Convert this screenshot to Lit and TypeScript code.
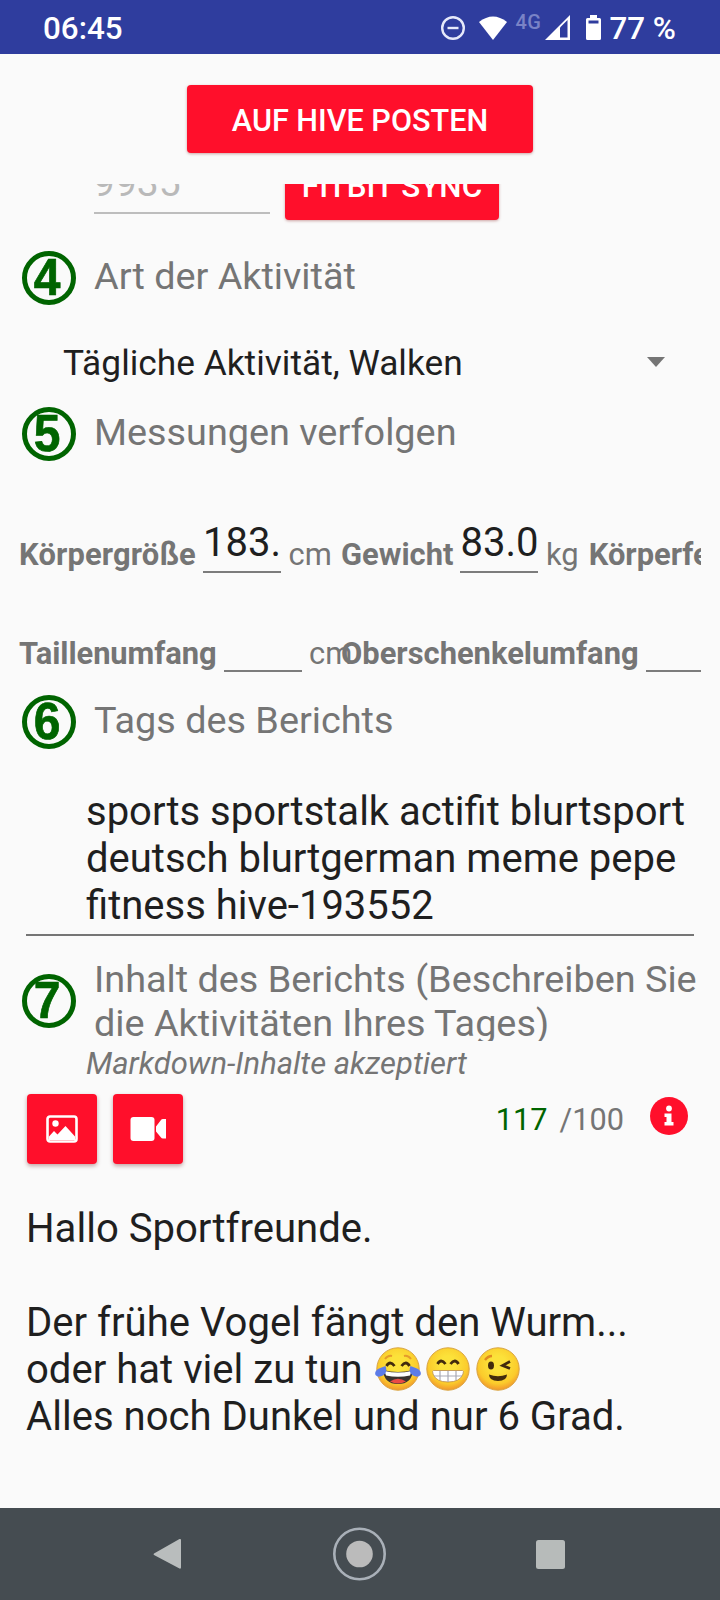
import { LitElement, html, css, svg } from "lit";
import { customElement, property } from "lit/decorators.js";

@customElement("step-title")
class StepTitle extends LitElement {
  @property() num = "";
  @property() text = "";
  static styles = css`
    :host { display: flex; align-items: center; height: 54px; padding-left: 3px; }
    .ring { box-sizing: border-box; flex: none; width: 54px; height: 54px; border: 5.5px solid #006400; border-radius: 50%; display: flex; align-items: center; justify-content: center; font: bold 51px/42px "Liberation Sans", Arial, sans-serif; color: #006400; }
    .ring span { transform: scaleX(.94); margin: -1px 3px 0 0; -webkit-text-stroke: .7px #006400; }
    .text { margin-left: 18px; font-size: 37.8px; line-height: 44.3px; color: #757575; white-space: nowrap; padding-bottom: 4px; }
    :host([tall]) { height: 80px; align-items: flex-start; overflow: hidden; }
    :host([tall]) .ring { margin-top: 13px; }
    :host([tall]) .text { white-space: pre; padding: 0; margin-top: -4px; }
  `;
  render() {
    return html`<div class="ring"><span>${this.num}</span></div><div class="text">${this.text}</div>`;
  }
}

const emojiDefs = svg`<defs>
  <radialGradient id="face" cx="50%" cy="38%" r="62%">
    <stop offset="0.3" stop-color="#fce23a"/><stop offset="0.75" stop-color="#fbcb2b"/><stop offset="1" stop-color="#f2962c"/>
  </radialGradient></defs>
  <circle cx="22" cy="22" r="21.2" fill="url(#face)" stroke="#d9a441" stroke-width="1"/>`;

@customElement("app-root")
class AppRoot extends LitElement {
  static styles = css`
    :host { display: flex; flex-direction: column; width: 720px; height: 1600px; overflow: hidden; background: #fafafa; font-family: Roboto, sans-serif; color: #1f1f1f; }
    svg { display: block; flex: none; }
    .status { height: 54px; flex: none; background: #2f3d9e; color: #fff; display: flex; align-items: center; padding: 0 44px 0 43px; box-sizing: border-box; font-weight: 500; font-size: 31.4px; line-height: 54px; padding-top: 1px; }
    .status .time { flex: 1; }
    .status .txt { padding-top: 2px; line-height: 52px; }
    .wifi { margin-left: 14px; }
    .batt { margin: 0 8px 0 15px; }
    .net { font-size: 20px; color: #7a83c6; width: 27px; margin: -12px 3px 0 8px; letter-spacing: .5px; }
    .head { height: 130px; flex: none; display: flex; justify-content: center; align-items: flex-start; box-sizing: border-box; padding: 31px 0 0 0; }
    .btn { box-sizing: border-box; background: #ff0f2b; color: #fff; border-radius: 4px; font-weight: 500; font-size: 30.6px; height: 69px; line-height: 72px; text-align: center; box-shadow: 0 1px 3px rgba(120,0,0,.35); white-space: nowrap; }
    .post { width: 346px; height: 68px; }
    .scroll { flex: 1; overflow: hidden; padding: 0 19px; display: flex; flex-direction: column; }
    .sync { display: flex; height: 70px; margin-top: -33px; padding-left: 75px; flex: none; }
    .steps { width: 176px; height: 61px; border-bottom: 2px solid #bdbdbd; font-size: 39px; line-height: 65px; color: #b9b9b9; margin-right: 15px; text-indent: -1px; }
    .fit { width: 214px; height: 69px; font-size: 31.4px; }
    step-title.s4 { margin-top: 30px; }
    .spin { display: flex; align-items: center; height: 54px; margin-top: 30px; padding: 0 36px 0 44px; font-size: 35.3px; line-height: 54px; }
    .spin span { flex: 1; padding-top: 1px; }
    step-title.s5 { margin-top: 18px; }
    .row { display: grid; grid-template-columns: 322px 420px; width: 682px; overflow: hidden; height: 66px; font-size: 30.9px; color: #757575; flex: none; }
    .r1 { margin-top: 49px; }
    .r2 { margin-top: 33px; }
    .cell { display: flex; white-space: nowrap; line-height: 90px; height: 66px; }
    .cell b { font-weight: 700; }
    .in { width: 78px; flex: none; height: 63px; box-sizing: border-box; border-bottom: 2px solid #7c7c7c; margin: 0 7.5px 0 7px; font-size: 40px; line-height: 66px; color: #1f1f1f; overflow: hidden; }
    .r1 .cell:first-child b { letter-spacing: .16px; }
    .r2 .cell:first-child b { letter-spacing: -.08px; }
    .kg { margin-right: 10px; }
    .six { margin-top: 20px; }
    .tags { margin: 39px 7px 0; padding-left: 60px; height: 146px; border-bottom: 2px solid #757575; font-size: 40px; line-height: 47px; white-space: pre; flex: none; }
    .seven { margin-top: 25px; }
    .md { font-style: italic; font-size: 31px; line-height: 40px; color: #757575; padding-left: 67px; margin-top: 3px; }
    .tools { display: flex; height: 70px; margin: 10px 7px 0 8px; flex: none; }
    .tool { width: 70px; height: 70px; display: flex; align-items: center; justify-content: center; margin-right: 16px; box-shadow: 0 2px 4px rgba(90,0,0,.35); }
    .count { margin-left: auto; display: flex; font-size: 30.7px; line-height: 52px; color: #757575; }
    .ok { color: #006400; margin-right: 12px; }
    .count svg { margin: 3px 6px 0 26px; }
    .editor { margin: 41px 7px 0; font-size: 40.1px; line-height: 47px; white-space: pre; }
    .line { display: flex; height: 47px; }
    .emo { display: flex; gap: 5.5px; margin: 1px 0 0 12px; }
    .nav { height: 92px; flex: none; background: #454c51; display: flex; align-items: center; box-sizing: border-box; padding: 0 155px 0 153px; justify-content: space-between; }
  `;

  render() {
    return html`
      <div class="status">
        <span class="time txt">06:45</span>
        <svg width="24" height="26" viewBox="0 0 24 26"><circle cx="12" cy="13" r="10.8" fill="none" stroke="#e6e9fa" stroke-width="2.4"/><path d="M6.500 13h11" stroke="#e6e9fa" stroke-width="2.400"/></svg>
        <svg class="wifi" width="28" height="26" viewBox="0 0 28 26"><path d="M14 25 0 7Q14-4 28 7Z" fill="#fff"/></svg>
        <span class="net">4G</span>
        <svg width="26" height="26" viewBox="0 0 26 26"><path d="M0 25 25 0V25Z" fill="#fff"/><path d="M15 12.500 22.500 5V22.500H15Z" fill="#2f3d9e"/></svg>
        <svg class="batt" width="15" height="26" viewBox="0 0 15 26"><path d="M4 3V0h7v3h2.500Q15 3 15 4.500V23.500Q15 25 13.500 25h-12Q0 25 0 23.500V4.500Q0 3 1.500 3Z" fill="#fff"/><path d="M2.500 5.500h10v3h-10z" fill="#2f3d9e"/></svg>
        <span class="txt">77 %</span>
      </div>
      <div class="head"><div class="btn post">AUF HIVE POSTEN</div></div>
      <div class="scroll">
        <div class="sync"><div class="steps">9935</div><div class="btn fit">FITBIT SYNC</div></div>
        <step-title class="s4" num="4" text="Art der Aktivität"></step-title>
        <div class="spin"><span>Tägliche Aktivität, Walken</span><svg width="18" height="10" viewBox="0 0 18 10"><path d="M0 0H18L9 10Z" fill="#757575"/></svg></div>
        <step-title class="s5" num="5" text="Messungen verfolgen"></step-title>
        <div class="row r1">
          <div class="cell"><b>Körpergröße</b><div class="in">183.</div>cm</div>
          <div class="cell"><b>Gewicht</b><div class="in">83.0</div><span class="kg">kg</span><b>Körperfett</b></div>
        </div>
        <div class="row r2">
          <div class="cell"><b>Taillenumfang</b><div class="in"></div>cm</div>
          <div class="cell"><b>Oberschenkelumfang</b><div class="in"></div></div>
        </div>
        <step-title class="six" num="6" text="Tags des Berichts"></step-title>
        <div class="tags">${"sports sportstalk actifit blurtsport\ndeutsch blurtgerman meme pepe\nfitness hive-193552"}</div>
        <step-title class="seven" tall num="7" text=${"Inhalt des Berichts (Beschreiben Sie\ndie Aktivitäten Ihres Tages)"}></step-title>
        <div class="md">Markdown-Inhalte akzeptiert</div>
        <div class="tools">
          <div class="btn tool"><svg width="32" height="28" viewBox="0 0 32 28"><rect x="1.500" y="1.500" width="29" height="25" rx="2.500" fill="none" stroke="#fff" stroke-width="2.600"/><circle cx="9.500" cy="8.500" r="3.200" fill="#fff"/><path d="M3 25V21.500l5-5.500 3.500 3.500L19.500 11l9.500 10.500V25Z" fill="#fff"/></svg></div>
          <div class="btn tool"><svg width="36" height="24" viewBox="0 0 36 24"><rect x=".5" width="24" height="24" rx="3" fill="#fff"/><path d="M26 9.500 31 3Q31.500 2 33 2H36V21.500H33Q31.500 21.500 31 20.500L26 14.500Z" fill="#fff"/></svg></div>
          <div class="count"><span class="ok">117</span><span>/100</span>
            <svg width="38" height="38" viewBox="0 0 38 38"><circle cx="19" cy="19" r="19" fill="#ff0f2b"/><circle cx="19" cy="11.500" r="2.900" fill="#fff"/><path d="M14.500 16.500H21.500V25H23.500V28.500H14.500V25H16.500V20H14.500Z" fill="#fff"/></svg>
          </div>
        </div>
        <div class="editor"><div class="line">Hallo Sportfreunde.</div><div class="line"></div><div class="line">Der frühe Vogel fängt den Wurm...</div><div class="line">oder hat viel zu tun<span class="emo">${this.joy()}${this.grin()}${this.wink()}</span></div><div class="line">Alles noch Dunkel und nur 6 Grad.</div></div>
      </div>
      <div class="nav">
        <svg width="28" height="32" viewBox="0 0 28 32"><path d="M1 15.500 26.500 1Q28 .5 28 2V29.500Q28 31 26.500 30.500L1 17Q0 16 1 15.500Z" fill="#b9bdbd"/></svg>
        <svg width="54" height="54" viewBox="0 0 54 54"><circle cx="27.500" cy="27" r="25.200" fill="none" stroke="#a9b0b8" stroke-width="2.600"/><circle cx="27.500" cy="27" r="13.300" fill="#bbb"/></svg>
        <svg width="29" height="29" viewBox="0 0 29 29"><rect width="29" height="29" rx="2.500" fill="#b7bbba"/></svg>
      </div>`;
  }

  joy() {
    return html`<svg width="46" height="44" viewBox="-1 0 46 44">${emojiDefs}
      <path d="M9 12q3-4 7-3M35 12q-3-4-7-3" fill="none" stroke="#e59b2b" stroke-width="2"/>
      <path d="M10.500 19q3.500-6 8 0M25.500 19q4.500-6 8 0" fill="none" stroke="#422b0d" stroke-width="2.800"/>
      <path d="M7 23Q22 27 37 23Q36 37 22 37Q8 37 7 23Z" fill="#3a3330"/><path d="M8.500 24Q22 27 35.500 24L34 28.500Q22 31 10 28.500Z" fill="#fff"/><path d="M14 34.500Q22 29 30 34.500Q22 38.500 14 34.500Z" fill="#ea4a45"/>
      <path d="M9.500 19Q12 25 7 28.500Q2 31-.5 28Q-2 24 3 21.500ZM34.500 19Q32 25 37 28.500Q42 31 44.500 28Q46 24 41 21.500Z" fill="#5c7ce8"/></svg>`;
  }
  grin() {
    return html`<svg width="44" height="44" viewBox="0 0 44 44">${emojiDefs}
      <path d="M11.500 17q3.500-6 8 0M24.500 17q4.500-6 8 0" fill="none" stroke="#422b0d" stroke-width="2.800"/>
      <path d="M7.500 23.500H36.500Q38 23.500 37 27Q34 35 22 35Q10 35 7 27Q6 23.500 7.500 23.500Z" fill="#fff" stroke="#b98a4a" stroke-width=".8"/>
      <path d="M8 29H36M14 24V33M22 24V35M30 24V33" stroke="#a9a9b5" stroke-width="1.200"/></svg>`;
  }
  wink() {
    return html`<svg width="44" height="44" viewBox="0 0 44 44">${emojiDefs}
      <path d="M9 13q3-4 7-4" fill="none" stroke="#e08a20" stroke-width="2.400"/>
      <ellipse cx="15" cy="18.500" rx="3" ry="4" fill="#422b0d"/>
      <path d="M34 14.500 26.500 18.500 34 21.500" fill="none" stroke="#422b0d" stroke-width="2.600"/>
      <path d="M13 27.500Q22 31 31 27.500Q31 34 22 34Q13 34 13 27.500Z" fill="#422b0d"/></svg>`;
  }
}
